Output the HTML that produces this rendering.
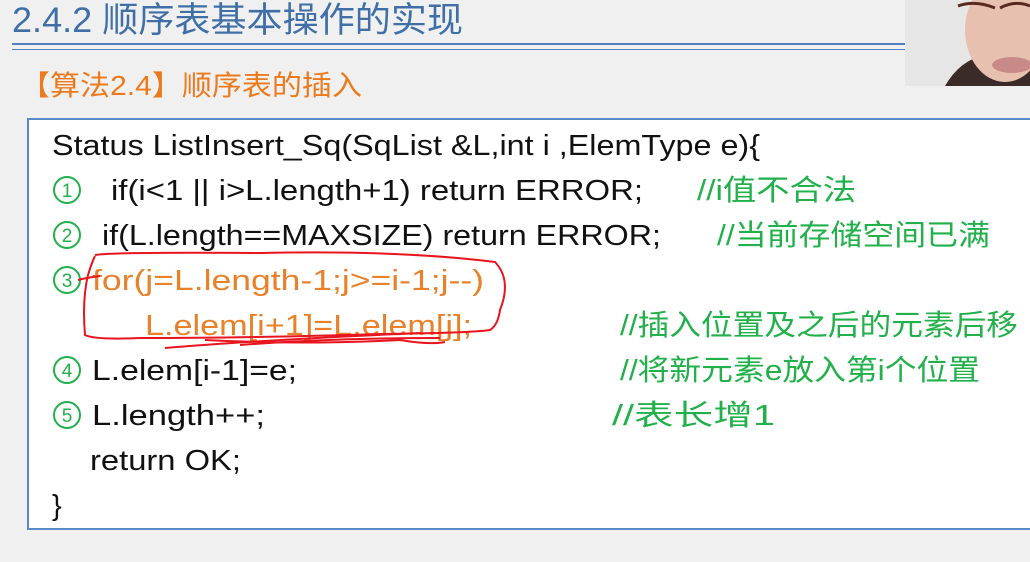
<!DOCTYPE html>
<html><head><meta charset="utf-8"><style>
html,body{margin:0;padding:0;width:1030px;height:562px;overflow:hidden;background:#f0f0f0}
svg{display:block}
</style></head><body>
<svg width="1030" height="562" xmlns="http://www.w3.org/2000/svg" font-family="Liberation Sans, Noto Sans CJK SC, sans-serif">
<rect width="1030" height="562" fill="#f0f0f0"/>
<text x="12" y="32" font-size="35" fill="#3f6fa6" textLength="451" lengthAdjust="spacingAndGlyphs">2.4.2 顺序表基本操作的实现</text>
<rect x="12" y="43" width="895" height="2" fill="#5080c0"/>
<rect x="12" y="49" width="895" height="1" fill="#5080c0"/>
<text x="20" y="95" font-size="28" fill="#ec7a1c" textLength="342" lengthAdjust="spacingAndGlyphs">【算法2.4】顺序表的插入</text>
<rect x="28" y="119" width="1010" height="410" fill="#fff" stroke="#5b88c6" stroke-width="2"/>
<!-- webcam -->
<rect x="905" y="0" width="125" height="86" fill="#e6e6e6"/>
<path d="M945 86 Q960 60 985 55 L1030 55 L1030 86Z" fill="#3a2a28"/>
<ellipse cx="1005" cy="30" rx="40" ry="52" fill="#e8c0b0"/>
<path d="M958 6 Q975 0 995 8 M1000 8 Q1015 0 1030 6" stroke="#5a2a20" stroke-width="3" fill="none"/>
<ellipse cx="1012" cy="65" rx="20" ry="8" fill="#c88a88"/>
<g font-size="29" fill="#111">
<text x="52" y="155" textLength="708" lengthAdjust="spacingAndGlyphs">Status ListInsert_Sq(SqList &amp;L,int i ,ElemType e){</text>
<text x="111" y="200" textLength="532" lengthAdjust="spacingAndGlyphs">if(i&lt;1 || i&gt;L.length+1) return ERROR;</text>
<text x="102" y="245" textLength="559" lengthAdjust="spacingAndGlyphs">if(L.length==MAXSIZE) return ERROR;</text>
<text x="92" y="380" textLength="205" lengthAdjust="spacingAndGlyphs">L.elem[i-1]=e;</text>
<text x="92" y="425" textLength="173" lengthAdjust="spacingAndGlyphs">L.length++;</text>
<text x="90" y="470" textLength="151" lengthAdjust="spacingAndGlyphs">return OK;</text>
<text x="52" y="515">}</text>
</g>
<g font-size="29" fill="#e8812a">
<text x="92" y="290" textLength="392" lengthAdjust="spacingAndGlyphs">for(j=L.length-1;j&gt;=i-1;j--)</text>
<text x="145" y="335" textLength="327" lengthAdjust="spacingAndGlyphs">L.elem[i+1]=L.elem[j];</text>
</g>
<g font-size="29" fill="#22b04a">
<text x="697" y="200" textLength="159" lengthAdjust="spacingAndGlyphs">//i值不合法</text>
<text x="717" y="245" textLength="273" lengthAdjust="spacingAndGlyphs">//当前存储空间已满</text>
<text x="620" y="335" textLength="398" lengthAdjust="spacingAndGlyphs">//插入位置及之后的元素后移</text>
<text x="620" y="380" textLength="360" lengthAdjust="spacingAndGlyphs">//将新元素e放入第i个位置</text>
<text x="612" y="425" textLength="163" lengthAdjust="spacingAndGlyphs">//表长增1</text>
</g>
<g fill="none" stroke="#22b04a" stroke-width="2">
<circle cx="67" cy="190" r="13"/><circle cx="67" cy="235" r="13"/><circle cx="67" cy="280" r="13"/><circle cx="67" cy="370" r="13"/><circle cx="67" cy="415" r="13"/>
</g>
<g font-size="19" fill="#22b04a" text-anchor="middle">
<text x="67" y="197">1</text><text x="67" y="242">2</text><text x="67" y="287">3</text><text x="67" y="377">4</text><text x="67" y="422">5</text>
</g>
<g fill="none" stroke="#e8141e" stroke-width="2">
<path d="M95 255 Q110 252 260 253 Q400 250 495 262 Q512 280 500 310 Q498 325 490 330 Q470 333 380 334 Q250 338 140 338 Q95 340 85 335 Q82 300 88 275 Q92 262 95 256"/>
<path d="M78 280 Q85 278 100 276"/>
<path d="M165 348 Q260 340 420 333"/>
<path d="M240 345 Q330 338 440 338"/>
<path d="M205 340 Q300 345 400 340 Q430 345 445 342"/>
</g>
</svg>
</body></html>
